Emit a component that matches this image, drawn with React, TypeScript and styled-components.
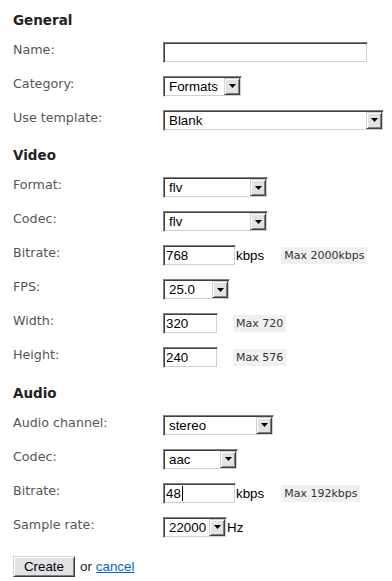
import React from "react";
import styled, { createGlobalStyle } from "styled-components";

const Global = createGlobalStyle`
  html, body { margin: 0; padding: 0; background: #fff; }
  body { font-family: "DejaVu Sans", Verdana, sans-serif; }
`;

const Page = styled.form`
  padding: 11.5px 13px 0;
`;

const Section = styled.section`
  margin-bottom: 3.5px;
`;

const Heading = styled.h2`
  margin: 0 0 13px;
  font-family: "DejaVu Sans", Verdana, sans-serif;
  font-weight: bold;
  font-size: 13.5px;
  line-height: 17px;
  color: #222;
`;

const Row = styled.div`
  display: flex;
  align-items: flex-start;
  height: 34px;
`;

const Label = styled.label`
  flex: 0 0 150px;
  font-size: 12.7px;
  line-height: 15px;
  color: #555;
`;

const Control = styled.div`
  display: flex;
  align-items: center;
  height: 21px;
  font-family: "Liberation Sans", Arial, sans-serif;
  font-size: 13.33px;
  color: #000;
`;

const Frame = styled.div<{ $w: number }>`
  box-sizing: border-box;
  width: ${(p) => p.$w}px;
  height: 21px;
  border: 1px solid;
  border-color: #808080 #ffffff #ffffff #808080;
  box-shadow: inset 1px 1px 0 #404040, inset -1px -1px 0 #d4d0c8;
  background: #fff;
  display: flex;
  align-items: center;
  font-family: "Liberation Sans", Arial, sans-serif;
  font-size: 13.33px;
  color: #000;
  line-height: 17px;
`;

const BoxText = styled.span`
  padding-left: 2px;
  white-space: nowrap;
`;

const Caret = styled.span`
  display: inline-block;
  width: 1px;
  height: 15px;
  background: #000;
  margin-left: 1px;
`;

const SelectText = styled.span`
  flex: 1;
  padding-left: 5px;
  white-space: nowrap;
  overflow: hidden;
`;

const ArrowButton = styled.span`
  box-sizing: border-box;
  flex: 0 0 16px;
  height: 17px;
  margin-right: 1px;
  border: 1px solid;
  border-color: #d4d0c8 #404040 #404040 #d4d0c8;
  box-shadow: inset 1px 1px 0 #ffffff, inset -1px -1px 0 #808080;
  background: #e2e2e6;
  display: flex;
  align-items: center;
  justify-content: center;
`;

const Unit = styled.span`
  margin-right: 2px;
`;

const Hint = styled.span`
  display: inline-block;
  margin-left: 15px;
  padding: 0 3px;
  line-height: 17px;
  background: #f0f0f0;
  color: #333;
  font-family: "DejaVu Sans", Verdana, sans-serif;
  font-size: 11px;
`;

const Actions = styled.div`
  padding-top: 1.5px;
  display: flex;
  align-items: center;
  font-family: "Liberation Sans", Arial, sans-serif;
  font-size: 13.33px;
  color: #222;
`;

const Button = styled.button`
  box-sizing: border-box;
  width: 62px;
  height: 21px;
  padding: 0;
  border: 1px solid;
  border-color: #d4d0c8 #404040 #404040 #d4d0c8;
  box-shadow: inset 1px 1px 0 #ffffff, inset -1px -1px 0 #808080;
  background: #e2e2e6;
  font-family: "Liberation Sans", Arial, sans-serif;
  font-size: 13.33px;
  color: #000;
`;

const Or = styled.span`
  margin: 0 4px 0 5px;
`;

const CancelLink = styled.a`
  color: #0066cc;
  text-decoration: underline;
`;

const TextBox = ({ w, value = "", caret = false }: { w: number; value?: string; caret?: boolean }) => (
  <Frame $w={w} role="textbox">
    <BoxText>{value}</BoxText>
    {caret && <Caret />}
  </Frame>
);

const Select = ({ w, value }: { w: number; value: string }) => (
  <Frame $w={w} role="combobox">
    <SelectText>{value}</SelectText>
    <ArrowButton>
      <svg width="7" height="4" viewBox="0 0 7 4">
        <path d="M0 0H7L3.5 4Z" fill="#000" />
      </svg>
    </ArrowButton>
  </Frame>
);

const Field = ({ label, children }: { label: string; children: React.ReactNode }) => (
  <Row>
    <Label>{label}</Label>
    <Control>{children}</Control>
  </Row>
);

export default function App() {
  return (
    <>
      <Global />
      <Page onSubmit={(e) => e.preventDefault()}>
        <Section>
          <Heading>General</Heading>
          <Field label="Name:">
            <TextBox w={205} />
          </Field>
          <Field label="Category:">
            <Select w={79} value="Formats" />
          </Field>
          <Field label="Use template:">
            <Select w={221} value="Blank" />
          </Field>
        </Section>
        <Section>
          <Heading>Video</Heading>
          <Field label="Format:">
            <Select w={105} value="flv" />
          </Field>
          <Field label="Codec:">
            <Select w={105} value="flv" />
          </Field>
          <Field label="Bitrate:">
            <TextBox w={73} value="768" />
            <Unit>kbps</Unit>
            <Hint>Max 2000kbps</Hint>
          </Field>
          <Field label="FPS:">
            <Select w={67} value="25.0" />
          </Field>
          <Field label="Width:">
            <TextBox w={55} value="320" />
            <Hint>Max 720</Hint>
          </Field>
          <Field label="Height:">
            <TextBox w={55} value="240" />
            <Hint>Max 576</Hint>
          </Field>
        </Section>
        <Section>
          <Heading>Audio</Heading>
          <Field label="Audio channel:">
            <Select w={111} value="stereo" />
          </Field>
          <Field label="Codec:">
            <Select w={75} value="aac" />
          </Field>
          <Field label="Bitrate:">
            <TextBox w={73} value="48" caret />
            <Unit>kbps</Unit>
            <Hint>Max 192kbps</Hint>
          </Field>
          <Field label="Sample rate:">
            <Select w={64} value="22000" />
            <Unit>Hz</Unit>
          </Field>
        </Section>
        <Actions>
          <Button type="submit">Create</Button>
          <Or>or</Or>
          <CancelLink href="#">cancel</CancelLink>
        </Actions>
      </Page>
    </>
  );
}
